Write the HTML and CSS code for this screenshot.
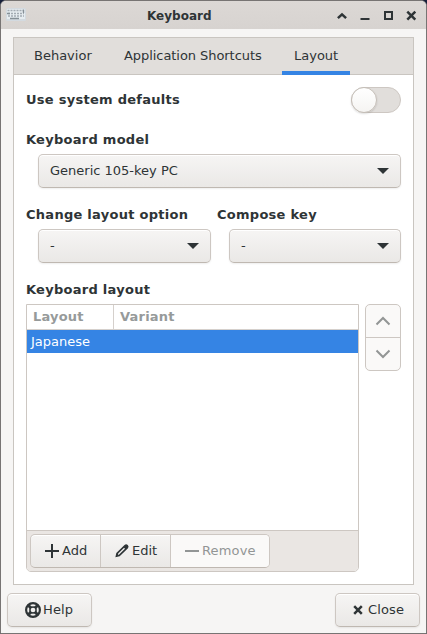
FILE: index.html
```html
<!DOCTYPE html>
<html lang="en">
<head>
<meta charset="utf-8">
<title>Keyboard</title>
<link rel="stylesheet" href="styles.css">
</head>
<body>
<div class="window">
  <header class="titlebar">
    <svg class="app-icon" width="20" height="14" viewBox="0 0 20 14">
      <rect x="0" y="0" width="20" height="13" rx="1.5" fill="#d3dae0"/>
      <rect x="1" y="1" width="18" height="10" fill="#e6ecf0"/>
      <path d="M1.5 2.5H17M2 5.5H18M2 8H18" stroke="#a3abb2" stroke-width="1.5" stroke-dasharray="2 1"/>
      <path d="M4 10.5H13M17.5 1.5V5M1 5.5H4" stroke="#858f96" stroke-width="1.4"/>
    </svg>
    <h1 class="title">Keyboard</h1>
    <div class="controls">
      <svg width="10" height="10" viewBox="0 0 10 10"><path d="M.9 7.2 5 3.4 9.1 7.2" class="stroke heavy"/></svg>
      <svg width="10" height="10" viewBox="0 0 10 10"><path d="M.5 8H9.5" class="stroke"/></svg>
      <svg width="10" height="10" viewBox="0 0 10 10"><path d="M2 1H9V8H2Z" class="stroke"/></svg>
      <svg width="10" height="10" viewBox="0 0 10 10"><path d="M1.3 .7 9.3 8.7M9.3 .7 1.3 8.7" class="stroke heavy"/></svg>
    </div>
  </header>
  <main class="notebook">
    <nav class="tabs">
      <span class="tab">Behavior</span>
      <span class="tab shortcuts">Application Shortcuts</span>
      <span class="tab active">Layout</span>
    </nav>
    <section class="page">
      <div class="switch-row">
        <span class="label">Use system defaults</span>
        <span class="switch"><span class="knob"></span></span>
      </div>
      <div class="field model">
        <span class="label">Keyboard model</span>
        <div class="select">Generic 105-key PC<svg width="12" height="6" viewBox="0 0 12 6"><path d="M0 0H12L6 6Z" fill="#2e3436"/></svg></div>
      </div>
      <div class="pair">
        <div class="field">
          <span class="label">Change layout option</span>
          <div class="select">-<svg width="12" height="6" viewBox="0 0 12 6"><path d="M0 0H12L6 6Z" fill="#2e3436"/></svg></div>
        </div>
        <div class="field">
          <span class="label">Compose key</span>
          <div class="select">-<svg width="12" height="6" viewBox="0 0 12 6"><path d="M0 0H12L6 6Z" fill="#2e3436"/></svg></div>
        </div>
      </div>
      <div class="label list-label">Keyboard layout</div>
      <div class="list-area">
        <div class="list">
          <div class="list-head"><span class="col-layout">Layout</span><span class="col-variant">Variant</span></div>
          <div class="list-row">Japanese</div>
          <div class="list-space"></div>
          <div class="toolbar">
            <div class="group">
              <div class="tool add"><svg width="14" height="14" viewBox="0 0 14 14"><path d="M0 7H14M7 0V14" class="stroke"/></svg>Add</div>
              <div class="tool edit"><svg width="14" height="14" viewBox="0 0 15 15"><path fill="#2e3436" fill-rule="evenodd" d="M.4 14.3 1.4 9.7 10.2 1Q12.1-.5 13.7 1.2 15.3 2.9 13.9 4.6L5 13.2ZM3.2 11.7 4.4 11.3 10.7 5 9.7 3.9 3.4 10.3Z"/></svg>Edit</div>
              <div class="tool remove disabled"><svg width="14" height="14" viewBox="0 0 14 14"><path d="M0 7H14" stroke="#929595" stroke-width="2"/></svg>Remove</div>
            </div>
          </div>
        </div>
        <div class="mover">
          <div><svg width="16" height="10" viewBox="0 0 16 10"><path d="M1.5 8.5 8 2 14.5 8.5" class="arrow"/></svg></div>
          <div><svg width="16" height="10" viewBox="0 0 16 10"><path d="M1.5 1.5 8 8 14.5 1.5" class="arrow"/></svg></div>
        </div>
      </div>
    </section>
  </main>
  <footer class="actions">
    <div class="button help"><svg width="16" height="16" viewBox="0 0 16 16"><circle cx="8" cy="8" r="6.9" fill="none" stroke="#2e3436" stroke-width="2.2"/><circle cx="8" cy="8" r="3.1" fill="none" stroke="#2e3436" stroke-width="1.5"/><path d="M3 3 6 6M13 3 10 6M3 13 6 10M13 13 10 10" stroke="#2e3436" stroke-width="3"/></svg>Help</div>
    <div class="button close"><svg width="10" height="10" viewBox="0 0 10 10"><path d="M1.2 1.2 8.8 8.8M8.8 1.2 1.2 8.8" stroke="#2e3436" stroke-width="2.5"/></svg>Close</div>
  </footer>
</div>
</body>
</html>
```
FILE: styles.css
```css
* { box-sizing: border-box; }
body {
  margin: 0;
  background: #17203b;
  color: #2e3436;
  font: 13px/16px "DejaVu Sans", sans-serif;
}
svg { display: block; flex: none; overflow: visible; }
.stroke { fill: none; stroke: #2e3436; stroke-width: 2; }
.heavy { stroke-width: 2.5; }
.window {
  width: 427px;
  height: 634px;
  display: flex;
  flex-direction: column;
  border: 1px solid #777473;
  border-radius: 6px 6px 0 0;
  background: #f6f5f4;
  overflow: hidden;
}
.titlebar {
  height: 28px;
  flex: none;
  display: flex;
  align-items: center;
  padding: 0 10px 0 5px;
  background: linear-gradient(#dcd8d5, #d7d3d0);
}
.title {
  flex: 1;
  margin: 2px 0 0 121px;
  font-size: 12px;
  line-height: 16px;
  font-weight: bold;
}
.controls { display: flex; gap: 13px; margin-top: 1px; }
.notebook {
  width: 401px;
  height: 548px;
  margin: 8px 0 0 12px;
  border: 1px solid #c9c5c0;
  background: #fff;
}
.tabs {
  display: flex;
  height: 37px;
  padding: 0 8px;
  gap: 8px;
  border-bottom: 1px solid #c9c5c0;
  background: #e1dedb;
}
.tab { width: 82px; height: 37px; padding: 10px 12px 0; white-space: nowrap; }
.tab.shortcuts { width: 162px; letter-spacing: -0.06px; }
.tab.active { width: 68px; border-bottom: 4px solid #3584e4; }
.page { padding: 12px; }
.label { font-weight: bold; letter-spacing: 0.27px; white-space: nowrap; }
.switch-row { display: flex; justify-content: space-between; align-items: center; height: 26px; }
.switch {
  width: 50px;
  height: 26px;
  border: 1px solid #cdc7c2;
  border-radius: 13px;
  background: #e1dedb;
}
.knob {
  display: block;
  width: 26px;
  height: 26px;
  margin: -1px;
  border: 1px solid #c5bfb8;
  border-radius: 50%;
  background: linear-gradient(#fff, #f5f4f2);
  box-shadow: 0 1px 2px #0002;
}
.field .label { display: block; }
.model { margin-top: 19px; }
.select, .button {
  display: flex;
  align-items: center;
  height: 34px;
  border: 1px solid #cdc7c2;
  border-bottom-color: #bfb8b1;
  border-radius: 5px;
  background: linear-gradient(#f6f5f4, #eae8e6);
  box-shadow: inset 0 1px #fff, 0 1px 2px #00000012;
}
.select { justify-content: space-between; margin: 6px 0 0 12px; padding: 0 11px; }
.pair { display: grid; grid-template-columns: 185px 184px; gap: 6px; margin-top: 19px; }
.list-label { margin-top: 19px; }
.list-area { display: flex; align-items: flex-start; gap: 6px; margin-top: 6px; }
.list {
  width: 333px;
  height: 268px;
  display: flex;
  flex-direction: column;
  border: 1px solid #cdc7c2;
  border-radius: 0 0 5px 5px;
  overflow: hidden;
}
.list-head {
  display: flex;
  height: 25px;
  border-bottom: 1px solid #d5d0cc;
  color: #969a9a;
  font-weight: bold;
  letter-spacing: 0.2px;
  line-height: 24px;
}
.col-layout { width: 87px; padding-left: 6px; border-right: 1px solid #d5d0cc; }
.col-variant { padding-left: 6px; }
.list-row { height: 23px; padding-left: 4px; line-height: 24px; color: #fff; background: #3584e4; }
.list-space { flex: 1; }
.toolbar { height: 41px; padding: 3px; border-top: 1px solid #cdc7c2; background: #eae6e3; }
.group {
  display: flex;
  width: 240px;
  height: 34px;
  border: 1px solid #cdc7c2;
  border-bottom-color: #bfb8b1;
  border-radius: 5px;
  background: linear-gradient(#f6f5f4, #eae8e6);
  box-shadow: inset 0 1px #fff;
  overflow: hidden;
}
.tool { display: flex; align-items: center; gap: 3px; padding-left: 14px; }
.add { width: 70px; border-right: 1px solid #cdc7c2; }
.edit { width: 70px; border-right: 1px solid #cdc7c2; }
.remove { flex: 1; letter-spacing: 0.15px; }
.disabled { color: #929595; background: #faf9f8; }
.mover { width: 36px; height: 67px; border: 1px solid #cdc7c2; border-radius: 5px; background: #faf9f8; }
.mover div { display: flex; align-items: center; justify-content: center; height: 32px; }
.mover div + div { height: 33px; border-top: 1px solid #cdc7c2; }
.arrow { fill: none; stroke: #929595; stroke-width: 2; }
.actions { display: flex; justify-content: space-between; padding: 8px 6px 0; }
.button { width: 85px; }
.help { padding-left: 17px; gap: 2px; letter-spacing: 0.15px; }
.close { padding-left: 17px; gap: 5px; letter-spacing: 0.15px; }
```
